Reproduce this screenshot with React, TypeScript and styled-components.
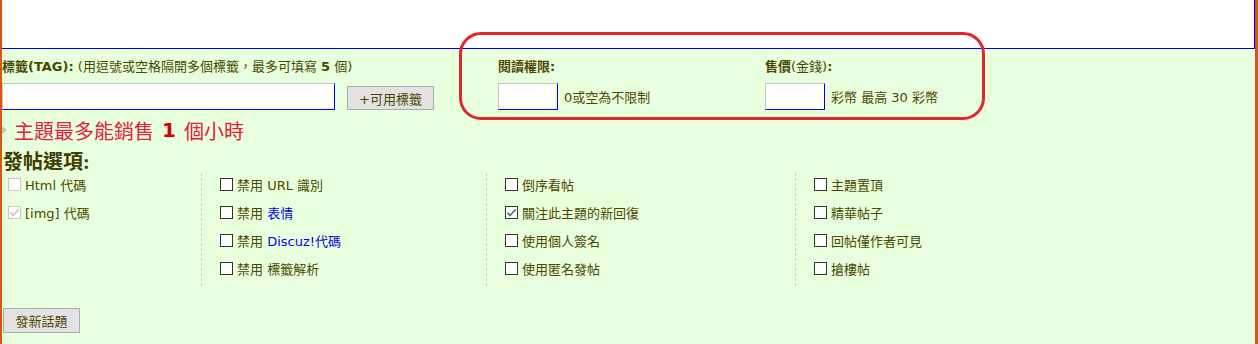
import React from "react";
import styled, { createGlobalStyle } from "styled-components";

const GlobalStyle = createGlobalStyle`
  body {
    margin: 0;
    background: #ffffff;
  }
`;

const Frame = styled.div`
  position: relative;
  width: 1258px;
  height: 344px;
  box-sizing: border-box;
  border-left: 2px solid #d5560f;
  border-right: 3px solid #d5560f;
  background: #e8ffdd;
  font: 13px "DejaVu Sans", "Noto Sans CJK TC", sans-serif;
  color: #4a4800;
  overflow: hidden;
`;

const Editor = styled.textarea`
  display: block;
  width: 100%;
  height: 49px;
  margin: 0;
  padding: 0;
  box-sizing: border-box;
  border: none;
  border-bottom: 1px solid #0000ee;
  border-right: 1px solid #0000ee;
  background: #ffffff;
  resize: none;
  outline: none;
`;

const FieldRow = styled.div`
  display: flex;
  padding-top: 9px;
`;

const FieldGroup = styled.div<{ $w?: number }>`
  ${({ $w }) => ($w ? `width: ${$w}px;` : "flex: 1;")}
  display: flex;
  flex-direction: column;
  gap: 8px;
`;

const Label = styled.div`
  line-height: 17px;
  white-space: nowrap;
`;

const Strong = styled.b`
  font-weight: bold;
`;

const Controls = styled.div<{ $align: string }>`
  display: flex;
  align-items: ${({ $align }) => $align};
`;

const TextInput = styled.input<{ $w: number }>`
  width: ${({ $w }) => $w}px;
  height: 27px;
  margin: 0;
  padding: 0 3px;
  box-sizing: border-box;
  background: #ffffff;
  border: 1px solid;
  border-color: #c4c4c4 #0000ee #0000ee #c4c4c4;
  outline: none;
`;

const Button = styled.button<{ $w: number; $h: number }>`
  width: ${({ $w }) => $w}px;
  height: ${({ $h }) => $h}px;
  margin: 0;
  padding: 0;
  box-sizing: border-box;
  background: #e2e2e2;
  border: 1px solid #ababab;
  font: 13px "DejaVu Sans", "Noto Sans CJK TC", sans-serif;
  color: #4a4800;
`;

const TagButton = styled(Button)`
  margin-left: 12px;
`;

const Hint = styled.span`
  margin-left: 6px;
  white-space: nowrap;
`;

const SaleNote = styled.div`
  display: flex;
  align-items: center;
  margin-top: 8px;
  height: 24px;
  font-size: 20px;
  color: #e3203c;

  &::before {
    content: "";
    width: 0;
    height: 0;
    border-top: 4.5px solid transparent;
    border-bottom: 4.5px solid transparent;
    border-left: 5px solid #c4c4c4;
    margin-right: 7px;
  }
`;

const SaleHours = styled.b`
  margin: 0 8px;
  color: #d80000;
`;

const OptionsTitle = styled.div`
  margin-top: 4px;
  padding-left: 1px;
  height: 24px;
  line-height: 24px;
  font: bold 20px "Liberation Serif", "Noto Sans CJK TC", serif;
  color: #3f3d00;
`;

const OptionsGrid = styled.div`
  display: grid;
  grid-template-columns: 199px 285px 309px 1fr;
  height: 116px;
`;

const OptionColumn = styled.div<{ $first?: boolean }>`
  display: flex;
  flex-direction: column;
  margin-top: 3px;
  padding-left: ${({ $first }) => ($first ? "6px" : "18px")};
  border-left: ${({ $first }) => ($first ? "none" : "1px dashed #cccccc")};
`;

const OptionRow = styled.label`
  display: flex;
  align-items: center;
  gap: 4px;
  height: 28px;
  white-space: nowrap;

  &:first-child {
    margin-top: -3px;
  }
`;

const Box = styled.span<{ $disabled?: boolean }>`
  display: inline-flex;
  align-items: center;
  justify-content: center;
  width: 13px;
  height: 13px;
  box-sizing: border-box;
  background: #ffffff;
  border: 1px solid ${({ $disabled }) => ($disabled ? "#c8c8c8" : "#333333")};
`;

const LinkText = styled.span`
  color: #0000ee;
`;

const SubmitBar = styled.div`
  margin-top: 22px;
  padding-left: 1px;
`;

const Highlight = styled.div`
  position: absolute;
  left: 457px;
  top: 32px;
  width: 526px;
  height: 88px;
  box-sizing: border-box;
  border: 3px solid #e4252c;
  border-radius: 22px;
  pointer-events: none;
`;

type Option = {
  label: React.ReactNode;
  checked?: boolean;
  disabled?: boolean;
};

const Checkbox = ({ checked, disabled }: { checked?: boolean; disabled?: boolean }) => (
  <Box $disabled={disabled}>
    {checked && (
      <svg width="11" height="11" viewBox="0 0 11 11">
        <polyline
          points="1.5,5.5 4,8.5 9.5,2.5"
          fill="none"
          stroke={disabled ? "#c0c0c0" : "#555555"}
          strokeWidth="1.4"
        />
      </svg>
    )}
  </Box>
);

const columns: Option[][] = [
  [
    { label: "Html 代碼", disabled: true },
    { label: "[img] 代碼", disabled: true, checked: true },
  ],
  [
    { label: "禁用 URL 識別" },
    { label: <>禁用 <LinkText>表情</LinkText></> },
    { label: <>禁用 <LinkText>Discuz!代碼</LinkText></> },
    { label: "禁用 標籤解析" },
  ],
  [
    { label: "倒序看帖" },
    { label: "關注此主題的新回復", checked: true },
    { label: "使用個人簽名" },
    { label: "使用匿名發帖" },
  ],
  [
    { label: "主題置頂" },
    { label: "精華帖子" },
    { label: "回帖僅作者可見" },
    { label: "搶樓帖" },
  ],
];

const App: React.FunctionComponent = () => {
  return (
    <>
      <GlobalStyle />
      <Frame>
        <Editor />

        <FieldRow>
          <FieldGroup $w={496}>
            <Label>
              <Strong>標籤(TAG):</Strong> (用逗號或空格隔開多個標籤，最多可填寫 <Strong>5</Strong> 個)
            </Label>
            <Controls $align="flex-end">
              <TextInput $w={333} />
              <TagButton $w={87} $h={24}>+可用標籤</TagButton>
            </Controls>
          </FieldGroup>

          <FieldGroup $w={267}>
            <Label>
              <Strong>閱讀權限:</Strong>
            </Label>
            <Controls $align="center">
              <TextInput $w={60} />
              <Hint>0或空為不限制</Hint>
            </Controls>
          </FieldGroup>

          <FieldGroup>
            <Label>
              <Strong>售價</Strong>(金錢)<Strong>:</Strong>
            </Label>
            <Controls $align="center">
              <TextInput $w={60} />
              <Hint>彩幣 最高 30 彩幣</Hint>
            </Controls>
          </FieldGroup>
        </FieldRow>

        <SaleNote>
          主題最多能銷售<SaleHours>1</SaleHours>個小時
        </SaleNote>

        <OptionsTitle>發帖選項:</OptionsTitle>

        <OptionsGrid>
          {columns.map((col, ci) => (
            <OptionColumn key={ci} $first={ci === 0}>
              {col.map((opt, oi) => (
                <OptionRow key={oi}>
                  <Checkbox checked={opt.checked} disabled={opt.disabled} />
                  <span>{opt.label}</span>
                </OptionRow>
              ))}
            </OptionColumn>
          ))}
        </OptionsGrid>

        <SubmitBar>
          <Button $w={77} $h={25}>發新話題</Button>
        </SubmitBar>

        <Highlight />
      </Frame>
    </>
  );
};

export default App;
